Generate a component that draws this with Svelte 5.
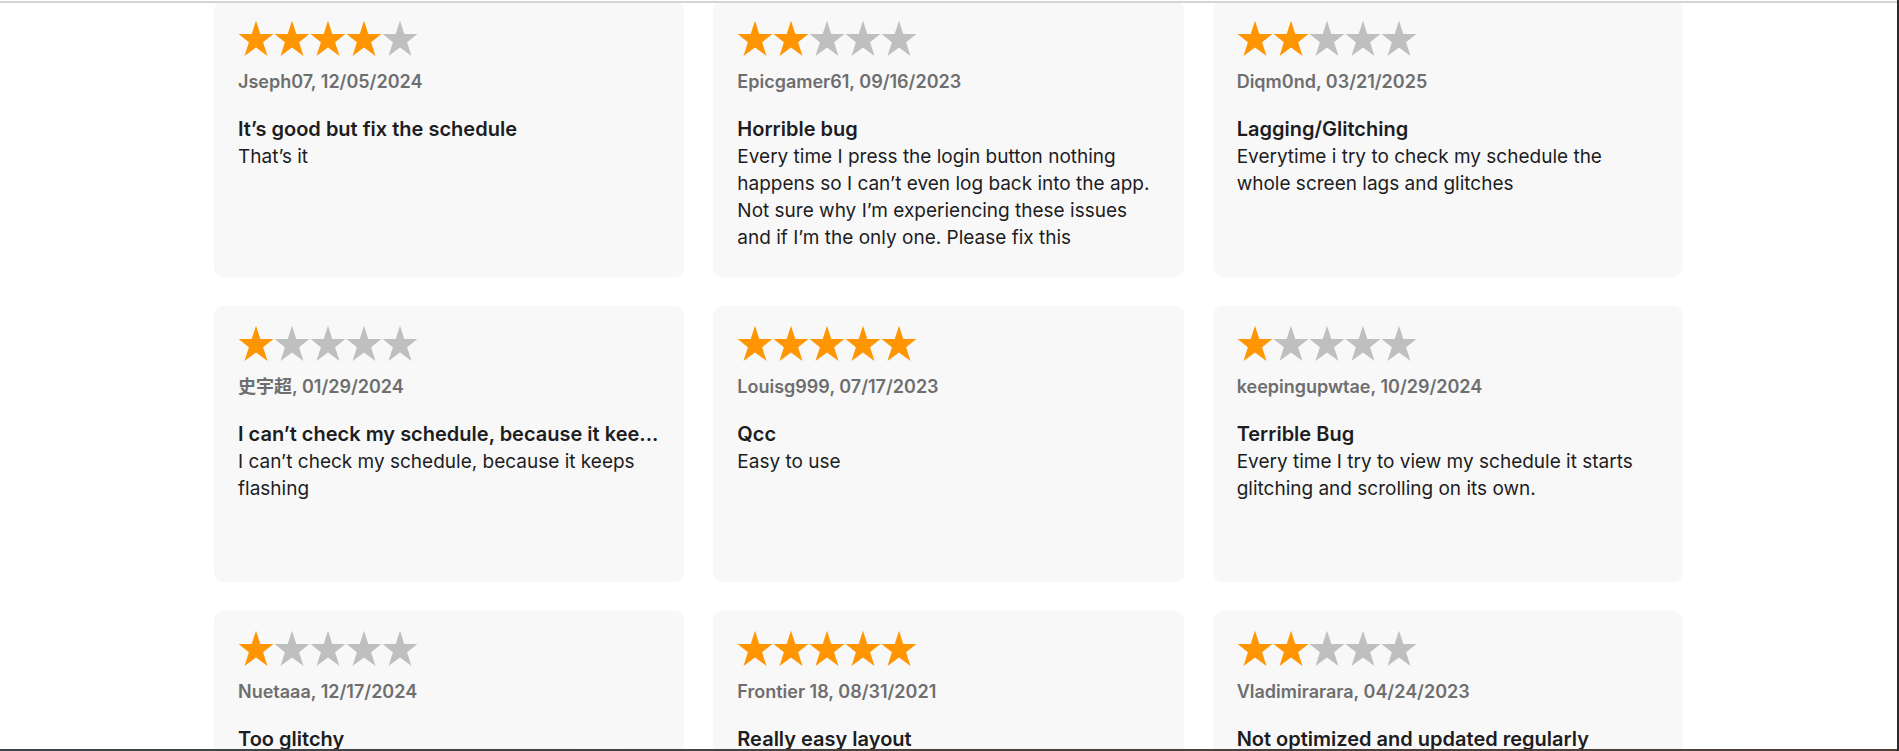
<script>
  const reviews = [
    { stars: 4, author: 'Jseph07', date: '12/05/2024', title: 'It’s good but fix the schedule', body: 'That’s it' },
    { stars: 2, author: 'Epicgamer61', date: '09/16/2023', title: 'Horrible bug', body: 'Every time I press the login button nothing happens so I can’t even log back into the app. Not sure why I’m experiencing these issues and if I’m the only one. Please fix this' },
    { stars: 2, author: 'Diqm0nd', date: '03/21/2025', title: 'Lagging/Glitching', body: 'Everytime i try to check my schedule the whole screen lags and glitches' },
    { stars: 1, author: '史宇超', date: '01/29/2024', title: 'I can’t check my schedule, because it kee...', body: 'I can’t check my schedule, because it keeps flashing' },
    { stars: 5, author: 'Louisg999', date: '07/17/2023', title: 'Qcc', body: 'Easy to use' },
    { stars: 1, author: 'keepingupwtae', date: '10/29/2024', title: 'Terrible Bug', body: 'Every time I try to view my schedule it starts glitching and scrolling on its own.' },
    { stars: 1, author: 'Nuetaaa', date: '12/17/2024', title: 'Too glitchy', body: '' },
    { stars: 5, author: 'Frontier 18', date: '08/31/2021', title: 'Really easy layout', body: '' },
    { stars: 2, author: 'Vladimirarara', date: '04/24/2023', title: 'Not optimized and updated regularly', body: '' }
  ];
</script>

<main class="window">
  <div class="grid">
    {#each reviews as review}
      <article class="card">
        <div class="stars" role="img" aria-label="{review.stars} out of 5">
          {#each [1, 2, 3, 4, 5] as n}
            <svg class="star" class:filled={n <= review.stars} viewBox="0 0 36 36" aria-hidden="true">
              <path d="M18 -.3 22.3 13H35.4L25.1 21.2 29.5 34.9 18 26.5 6.5 34.9 10.9 21.2 .6 13H13.7Z" />
            </svg>
          {/each}
        </div>
        <p class="meta">{review.author}, {review.date}</p>
        <h3 class="title">{review.title}</h3>
        <p class="body">{review.body}</p>
      </article>
    {/each}
  </div>
</main>

<style>
  :global(body) {
    margin: 0;
    background: #fff;
  }
  .window {
    position: relative;
    box-sizing: border-box;
    height: 100vh;
    overflow: hidden;
    padding: 1px 214px 0;
    border-right: 2px solid #2b2b2d;
    font-family: Inter, "Noto Sans CJK SC", sans-serif;
    color: #1d1d1f;
  }
  .window::before,
  .window::after {
    content: "";
    position: absolute;
    left: 0;
    right: 0;
    height: 2px;
  }
  .window::before {
    top: 1px;
    background: #d3d5d3;
  }
  .window::after {
    bottom: 0;
    background: linear-gradient(to right, #3b4648, #4a413d 50%, #4d4039);
  }
  .grid {
    display: grid;
    grid-template-columns: repeat(3, minmax(0, 1fr));
    gap: 29px;
  }
  .card {
    box-sizing: border-box;
    min-height: 276px;
    padding: 20px 24px 25px;
    border-radius: 9px;
    background: #f8f8f8;
  }
  .stars {
    display: flex;
    height: 36px;
  }
  .star {
    width: 36px;
    height: 36px;
    overflow: visible;
    fill: #bfbfbf;
  }
  .star.filled {
    fill: #ff9500;
  }
  p,
  h3 {
    margin: 0;
  }
  .meta {
    margin: 12px 0 22px;
    font-size: 18px;
    line-height: 25px;
    font-weight: 600;
    color: #6e6e6f;
  }
  .title,
  .body {
    line-height: 27px;
  }
  .title {
    font-size: 20px;
    font-weight: 600;
    overflow: hidden;
    white-space: nowrap;
    text-overflow: ellipsis;
  }
  .body {
    font-size: 19px;
    font-weight: 400;
  }
</style>
